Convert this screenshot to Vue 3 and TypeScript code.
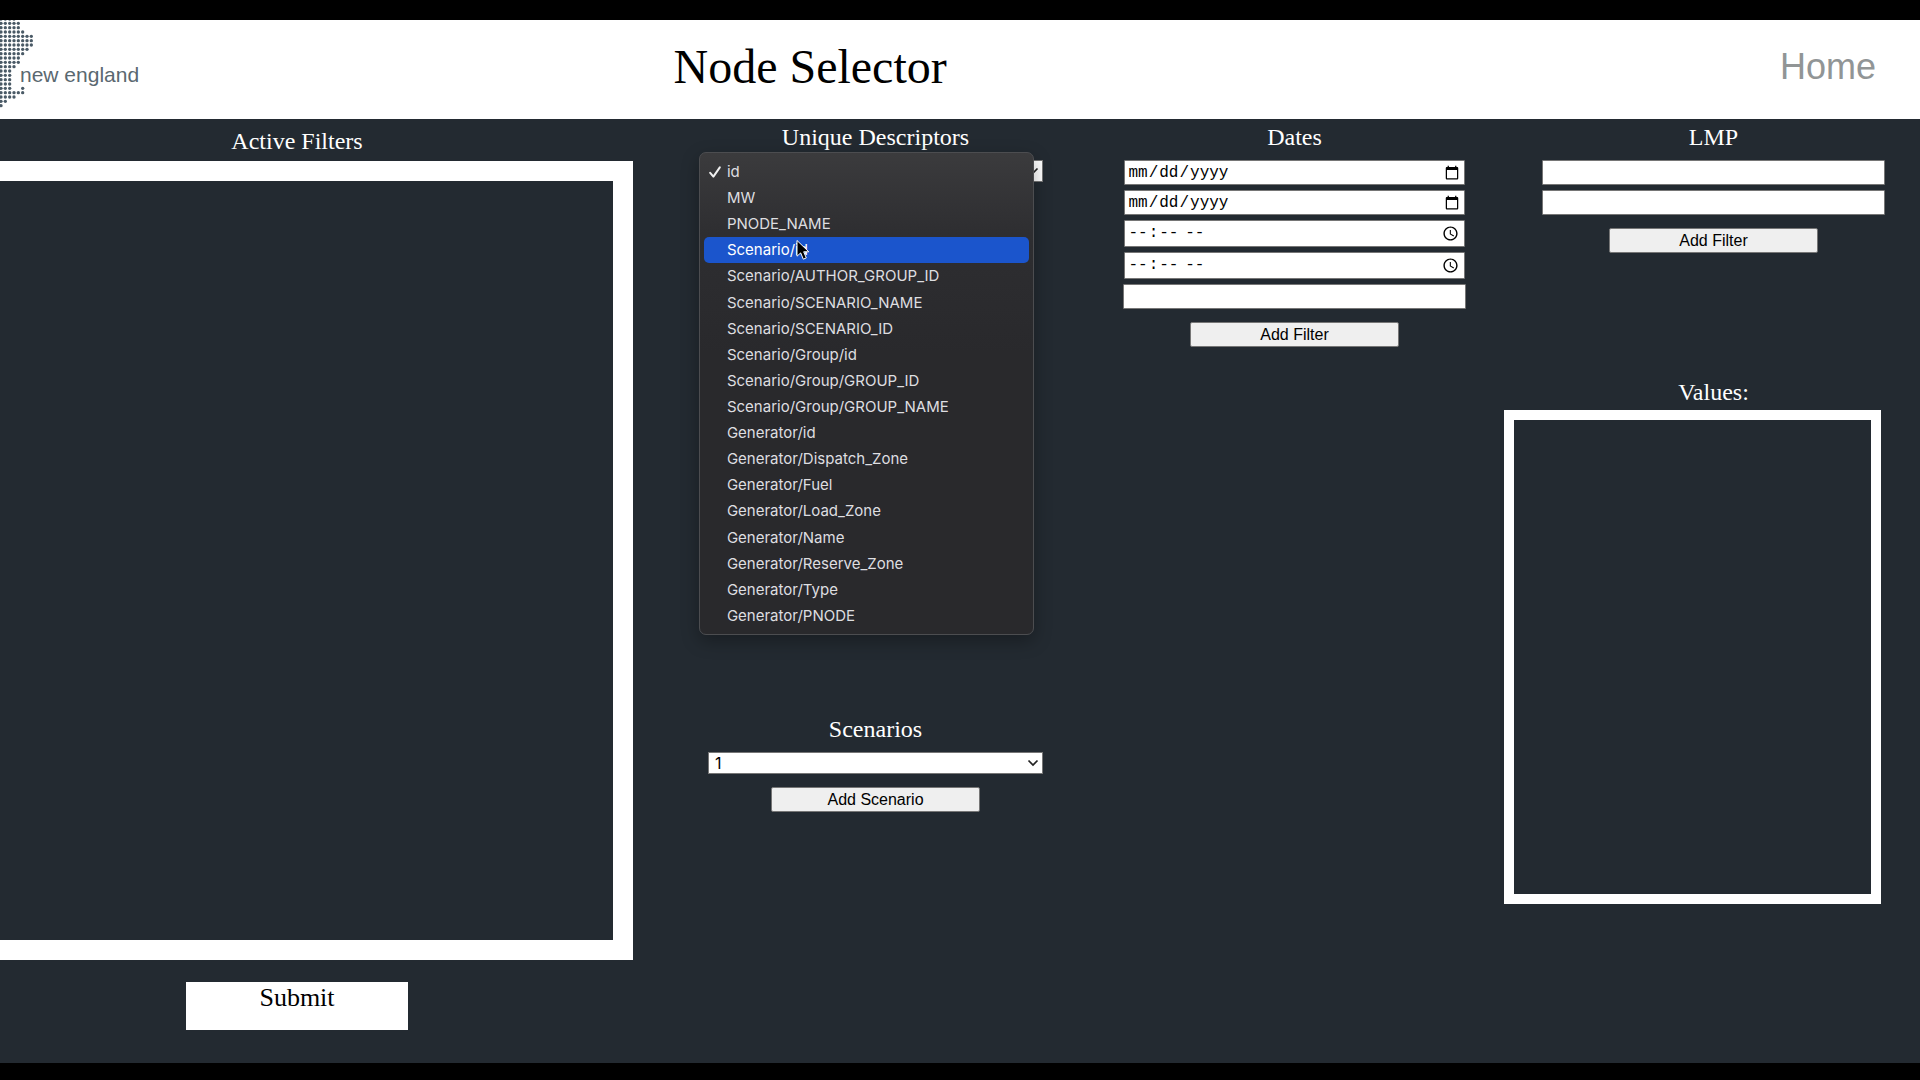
<script setup lang="ts">
import { ref } from 'vue'

const descriptors: string[] = [
  'id',
  'MW',
  'PNODE_NAME',
  'Scenario/id',
  'Scenario/AUTHOR_GROUP_ID',
  'Scenario/SCENARIO_NAME',
  'Scenario/SCENARIO_ID',
  'Scenario/Group/id',
  'Scenario/Group/GROUP_ID',
  'Scenario/Group/GROUP_NAME',
  'Generator/id',
  'Generator/Dispatch_Zone',
  'Generator/Fuel',
  'Generator/Load_Zone',
  'Generator/Name',
  'Generator/Reserve_Zone',
  'Generator/Type',
  'Generator/PNODE',
]

const selected = ref('id')
const hovered = ref('Scenario/id')
const scenario = ref('1')

// Number of dots in each row of the logo, from the top down.
const dotRows: number[] = [4, 5, 5, 6, 8, 8, 8, 7, 6, 5, 5, 4, 3, 3, 3, 3, 3, 6, 4, 2, 1]
const dots = dotRows.flatMap((count, row) =>
  Array.from({ length: count }, (_, col) => ({ x: 3 + col * 13, y: row * 13 - 3 })),
)
dots.push({ x: 68, y: 205 })
</script>

<template>
  <div class="page">
    <header class="top">
      <div class="brand">
        <svg class="dots" viewBox="0 0 102 276" aria-hidden="true">
          <circle v-for="(d, i) in dots" :key="i" :cx="d.x" :cy="d.y" r="5" />
        </svg>
        <span class="brand-name">new england</span>
      </div>
      <h1>Node Selector</h1>
      <a class="home" href="#">Home</a>
    </header>

    <main class="board">
      <section class="col active">
        <h2>Active Filters</h2>
        <div class="active-box"></div>
        <button type="button" class="submit">Submit</button>
      </section>

      <div class="col">
        <section class="group descriptors">
          <h2><label for="descriptor">Unique Descriptors</label></h2>
          <div class="picker">
            <select id="descriptor" v-model="selected">
              <option v-for="d in descriptors" :key="d" :value="d">{{ d }}</option>
            </select>
            <ul class="menu" role="listbox" aria-label="Unique Descriptors">
              <li
                v-for="d in descriptors"
                :key="d"
                role="option"
                :aria-selected="d === selected"
                :class="{ hovered: d === hovered }"
                @mouseenter="hovered = d"
                @click="selected = d"
              >
                <svg v-if="d === selected" class="check" viewBox="0 0 12 12" aria-hidden="true">
                  <path d="M1.2 6.8 4.4 10.6 10.8 1.4" />
                </svg>
                {{ d }}
                <svg v-if="d === hovered" class="pointer" viewBox="0 0 14 22" aria-hidden="true">
                  <path d="M1 1.5V17.2L4.7 13.9 7.3 20.2 10.3 18.9 7.7 12.8H12.8Z" />
                </svg>
              </li>
            </ul>
          </div>
        </section>
        <section class="group">
          <h2><label for="scenario">Scenarios</label></h2>
          <select id="scenario" v-model="scenario">
            <option value="1">1</option>
          </select>
          <button type="button" class="add">Add Scenario</button>
        </section>
      </div>

      <section class="col group">
        <h2>Dates</h2>
        <div class="fields">
          <input class="picker-field" type="date" aria-label="Start date" />
          <input class="picker-field" type="date" aria-label="End date" />
          <input class="picker-field time" type="time" aria-label="Start time" />
          <input class="picker-field time" type="time" aria-label="End time" />
          <input type="text" aria-label="Date value" />
        </div>
        <button type="button" class="add">Add Filter</button>
      </section>

      <div class="col">
        <section class="group lmp">
          <h2>LMP</h2>
          <div class="fields">
            <input type="text" aria-label="Minimum LMP" />
            <input type="text" aria-label="Maximum LMP" />
          </div>
          <button type="button" class="add">Add Filter</button>
        </section>
        <section class="values">
          <h2>Values:</h2>
          <div class="values-box"></div>
        </section>
      </div>
    </main>
  </div>
</template>

<style>
body {
  margin: 0;
  background: #000;
}
</style>

<style scoped>
* {
  box-sizing: border-box;
}

.page {
  display: flex;
  flex-direction: column;
  min-height: 100vh;
  padding: 20px 0 17px;
  overflow: hidden;
  font-family: 'Liberation Serif', 'Times New Roman', serif;
}

.top {
  display: grid;
  grid-template-columns: 674fr auto 930fr;
  align-items: center;
  height: 99px;
  padding-right: 44px;
  background: #fff;
}

.brand {
  display: flex;
  align-items: flex-start;
  height: 99px;
}

.dots {
  width: 34px;
  height: 92px;
  margin-right: -14px;
  fill: #4a5a66;
}

.brand-name {
  padding-top: 43px;
  font: 21px/24px 'Liberation Sans', Arial, sans-serif;
  color: #5a6870;
}

h1 {
  margin: 0;
  padding-bottom: 6px;
  font-size: 48px;
  line-height: 56px;
  font-weight: 400;
  color: #000;
}

.home {
  justify-self: end;
  padding-bottom: 6px;
  font: 36px/40px 'Liberation Sans', Arial, sans-serif;
  color: #919596;
  text-decoration: none;
}

/* The board is wider than the window and runs off its left edge. */
.board {
  display: grid;
  flex: 1;
  grid-template-columns: 738fr 419fr 419fr 419fr;
  margin: 0 -3px 0 -72px;
  padding-top: 4px;
  background: #232a31;
}

.col,
.group {
  display: flex;
  flex-direction: column;
  align-items: center;
}

.group {
  width: 100%;
}

h2 {
  margin: 0 0 9px;
  font-size: 24px;
  line-height: 28px;
  font-weight: 400;
  color: #fff;
}

.active {
  padding-top: 4px;
}

.active h2 {
  margin-bottom: 6px;
}

.active-box {
  width: 91%;
  height: 799px;
  border: 20px solid #fff;
}

.submit {
  width: 30%;
  height: 48px;
  margin-top: 22px;
  padding: 0 0 16px;
  border: 0;
  background: #fff;
  font: 26px/32px 'Liberation Serif', 'Times New Roman', serif;
  color: #000;
}

.descriptors {
  min-height: 592px;
}

select {
  appearance: none;
  width: 80%;
  height: 22px;
  padding: 0 20px 0 6px;
  border: 1px solid #767676;
  border-radius: 0;
  background: #fff
    url("data:image/svg+xml,%3Csvg xmlns='http://www.w3.org/2000/svg' viewBox='0 0 12 8'%3E%3Cpath d='M1.5 1.5 6 6 10.5 1.5' fill='none' stroke='%23222' stroke-width='1.7'/%3E%3C/svg%3E")
    no-repeat right 3px center / 12px 8px;
  font: 16px/20px Inter, sans-serif;
  color: #000;
}

.picker {
  position: relative;
  width: 80%;
}

.picker select {
  display: block;
  width: 100%;
}

.menu {
  position: absolute;
  top: -8px;
  left: -9px;
  display: grid;
  grid-auto-rows: 1fr;
  width: 100%;
  height: 483px;
  margin: 0;
  padding: 6px 4px 5px;
  border: 1px solid #4c4d50;
  border-radius: 7px;
  background: linear-gradient(#3b3b3d, #2e2e31 80px, #29292c 200px);
  box-shadow: 0 6px 18px rgba(0, 0, 0, 0.3);
  list-style: none;
  font: 15px/26px Inter, sans-serif;
  color: #dedee0;
}

.menu li {
  position: relative;
  padding-left: 23px;
  border-radius: 5px;
}

.menu .hovered {
  background: #1b55cc;
  color: #fff;
}

.check {
  position: absolute;
  top: 7px;
  left: 5px;
  width: 12px;
  height: 12px;
  fill: none;
  stroke: #f0f0f0;
  stroke-width: 2;
  stroke-linecap: round;
  stroke-linejoin: round;
}

.pointer {
  position: absolute;
  top: 2px;
  left: 92px;
  width: 14px;
  height: 22px;
  fill: #000;
  stroke: #fff;
  stroke-width: 1;
}

.fields {
  display: flex;
  flex-direction: column;
  align-items: center;
  gap: 5px;
  width: 82%;
}

input {
  width: 100%;
  height: 25px;
  padding: 1px 2px;
  border: 1px solid #767676;
  border-radius: 1px;
  background: #fff;
  font: 16px/20px 'Liberation Sans', Arial, sans-serif;
  color: #000;
}

.picker-field {
  width: 99%;
  font-family: 'Liberation Mono', 'Courier New', monospace;
}

.time {
  height: 27px;
}

.add {
  width: 50%;
  height: 25px;
  margin-top: 13px;
  padding: 0;
  border: 1px solid #767676;
  border-radius: 2px;
  background: #efefef;
  font: 16px/20px 'Liberation Sans', Arial, sans-serif;
  color: #000;
}

.lmp {
  min-height: 255px;
}

.values {
  width: 100%;
  text-align: center;
}

.values h2 {
  margin-bottom: 4px;
}

.values-box {
  width: 90%;
  height: 494px;
  border: 10px solid #fff;
}
</style>
